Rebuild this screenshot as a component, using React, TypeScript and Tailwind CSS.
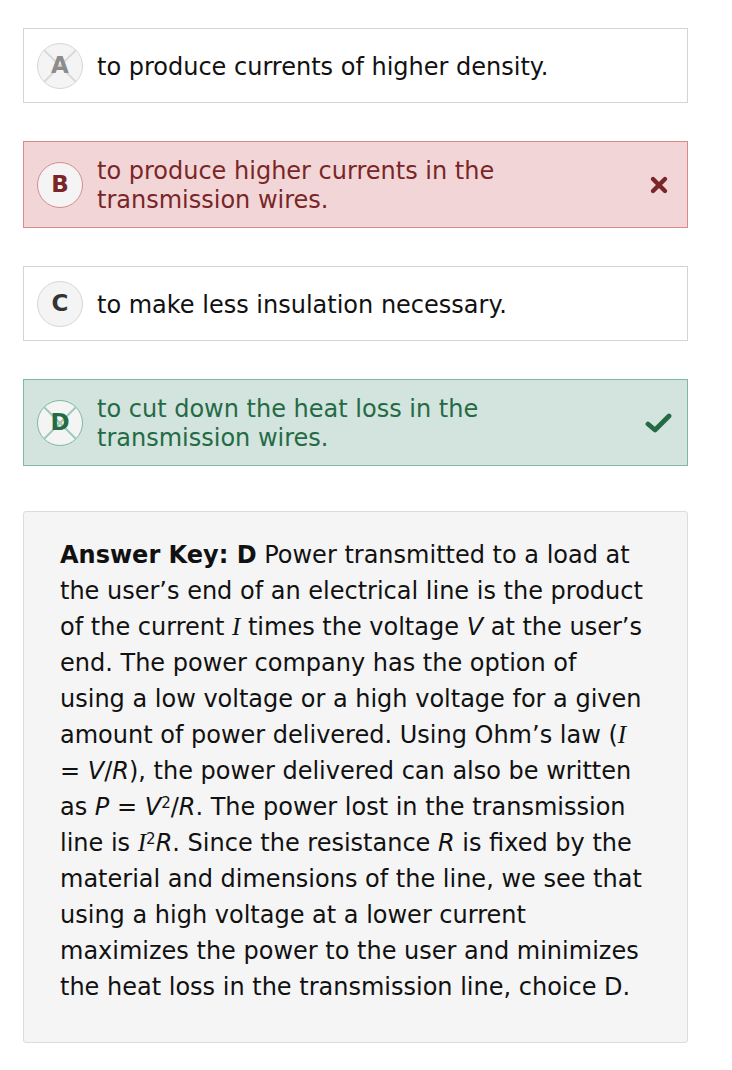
import React from "react";

const font = { fontFamily: '"DejaVu Sans", Verdana, sans-serif' };

function Circle({ letter, variant }: { letter: string; variant: "crossed" | "wrong" | "plain" | "right" }) {
  const border =
    variant === "wrong" ? "border-[#d88a8c]" : variant === "right" ? "border-[#7fb9a0]" : "border-[#d6d6d6]";
  const color =
    variant === "wrong" ? "text-[#7a2628]" : variant === "right" ? "text-[#246b45]" : variant === "crossed" ? "text-[#8c8c8c]" : "text-[#333333]";
  const lineColor = variant === "right" ? "#9cc9b4" : "#d9d9d9";
  return (
    <div className={`relative w-[46px] h-[46px] shrink-0 rounded-full border ${border} bg-[#f4f4f4] flex items-center justify-center overflow-hidden`}>
      {(variant === "crossed" || variant === "right") && (
        <svg className="absolute inset-0" width="44" height="44" viewBox="0 0 44 44">
          <line x1="6" y1="6" x2="38" y2="38" stroke={lineColor} strokeWidth="2" />
          <line x1="38" y1="6" x2="6" y2="38" stroke={lineColor} strokeWidth="2" />
        </svg>
      )}
      <span className={`relative font-bold text-[23px] leading-none ${color}`}>{letter}</span>
    </div>
  );
}

function Card({
  letter,
  variant,
  children,
}: {
  letter: string;
  variant: "crossed" | "wrong" | "plain" | "right";
  children: React.ReactNode;
}) {
  const box =
    variant === "wrong"
      ? "bg-[#f2d6d7] border-[#d88a8c] text-[#7a2628]"
      : variant === "right"
      ? "bg-[#d2e4dd] border-[#7fb9a0] text-[#246b45]"
      : "bg-white border-[#d4d4d4] text-[#111111]";
  return (
    <div className={`w-[665px] min-h-[75px] border ${box} flex items-center pl-[13px] pr-[20px] py-[12px]`}>
      <Circle letter={letter} variant={variant} />
      <div className="ml-[14px] flex-1 text-[24px] leading-[29px] pt-[3px]">{children}</div>
      {variant === "wrong" && (
        <svg width="20" height="20" viewBox="0 0 20 20" className="shrink-0 mr-[-2px]">
          <path d="M4 4 L16 16 M16 4 L4 16" stroke="#7a2628" strokeWidth="4.4" strokeLinecap="round" />
        </svg>
      )}
      {variant === "right" && (
        <svg width="28" height="22" viewBox="0 0 28 22" className="shrink-0 mr-[-6px]">
          <path d="M3 12 L10 18 L24 4" stroke="#246b45" strokeWidth="4.8" fill="none" strokeLinecap="round" strokeLinejoin="round" />
        </svg>
      )}
    </div>
  );
}

const I = () => <span style={{ fontFamily: '"Liberation Serif", serif' }} className="italic text-[25px]">I</span>;

export default function App() {
  return (
    <div className="min-h-[1070px] bg-white pl-[23px] pt-[28px]" style={font}>
      <div className="flex flex-col gap-[38px]">
        <Card letter="A" variant="crossed">to produce currents of higher density.</Card>
        <Card letter="B" variant="wrong">to produce higher currents in the<br />transmission wires.</Card>
        <Card letter="C" variant="plain">to make less insulation necessary.</Card>
        <Card letter="D" variant="right">to cut down the heat loss in the<br />transmission wires.</Card>
      </div>
      <div className="mt-[45px] w-[665px] h-[532px] bg-[#f5f5f5] border border-[#dcdcdc] rounded-[3px] pl-[36px] pr-[20px] pt-[25px] text-[24px] leading-[36px] text-[#111111] whitespace-nowrap">
        <p>
          <b>Answer Key: D</b> Power transmitted to a load at<br />
          the user’s end of an electrical line is the product<br />
          of the current <I /> times the voltage <i>V</i> at the user’s<br />
          end. The power company has the option of<br />
          using a low voltage or a high voltage for a given<br />
          amount of power delivered. Using Ohm’s law (<I /><br />
          = <i>V</i>/<i>R</i>), the power delivered can also be written<br />
          as <i>P</i> = <i>V</i><sup className="text-[15px]">2</sup>/<i>R</i>. The power lost in the transmission<br />
          line is <I /><sup className="text-[15px]">2</sup><i>R</i>. Since the resistance <i>R</i> is fixed by the<br />
          material and dimensions of the line, we see that<br />
          using a high voltage at a lower current<br />
          maximizes the power to the user and minimizes<br />
          the heat loss in the transmission line, choice D.
        </p>
      </div>
    </div>
  );
}
